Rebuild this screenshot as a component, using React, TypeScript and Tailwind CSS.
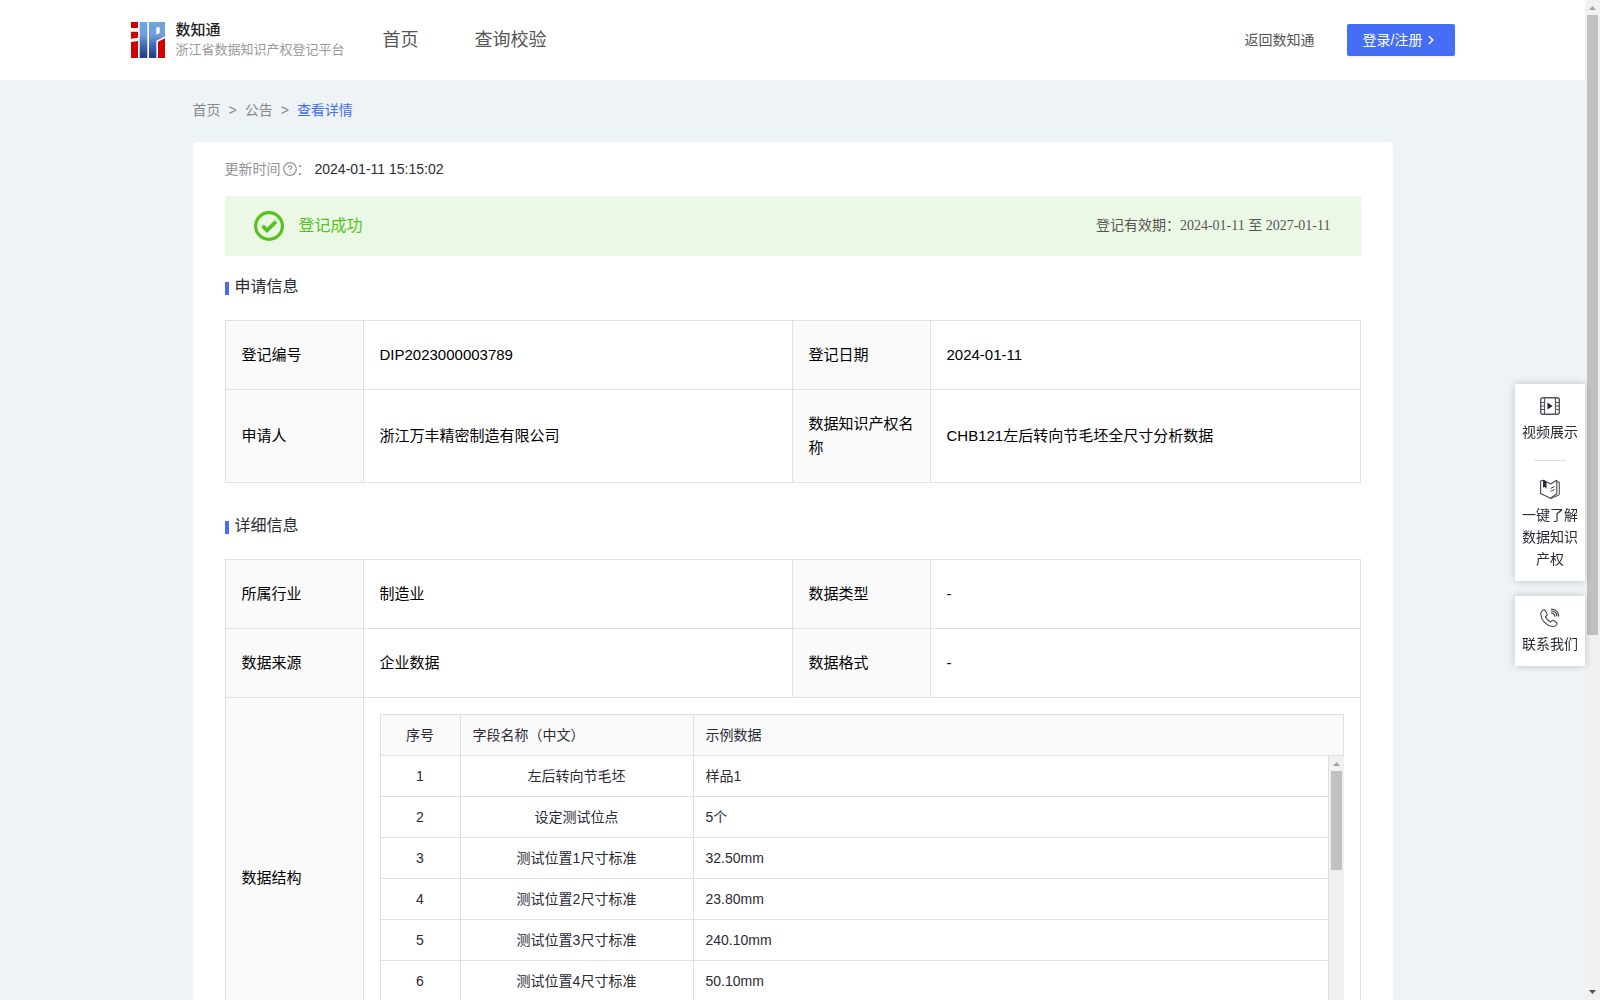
import { useState } from "react";
import { ChevronRight } from "lucide-react";

const applyRows = [
  ["登记编号", "DIP2023000003789", "登记日期", "2024-01-11"],
  ["申请人", "浙江万丰精密制造有限公司", "数据知识产权名称", "CHB121左后转向节毛坯全尺寸分析数据"],
];

const detailRows = [
  ["所属行业", "制造业", "数据类型", "-"],
  ["数据来源", "企业数据", "数据格式", "-"],
];

const fields = [
  { name: "左后转向节毛坯", sample: "样品1" },
  { name: "设定测试位点", sample: "5个" },
  { name: "测试位置1尺寸标准", sample: "32.50mm" },
  { name: "测试位置2尺寸标准", sample: "23.80mm" },
  { name: "测试位置3尺寸标准", sample: "240.10mm" },
  { name: "测试位置4尺寸标准", sample: "50.10mm" },
];

const line = "border-[#e0e0e0]";
const labelCell = `border-r border-b ${line} bg-[#fafafa] px-4 py-[22px] text-left font-normal`;
const valueCell = `border-r border-b ${line} px-4 py-[22px]`;
const fieldCell = `border-r border-b ${line} px-3 py-2 font-normal`;

function Logo() {
  return (
    <svg width="34" height="36" viewBox="0 0 102 108" aria-hidden="true">
      <defs>
        <linearGradient id="logoBlue" gradientUnits="userSpaceOnUse" x1="0" y1="0" x2="0" y2="108">
          <stop offset="0" stopColor="#6fa3df" />
          <stop offset="0.35" stopColor="#6f9fdc" />
          <stop offset="0.65" stopColor="#4468b0" />
          <stop offset="1" stopColor="#233a85" />
        </linearGradient>
      </defs>
      <g fill="#d00000">
        <path d="M0 0h21v18H0z" />
        <path d="M0 29h21v18L0 50z" />
        <path d="M0 60l21-3v51H0z" />
        <path d="M81 59l21-10v59H81z" />
      </g>
      <g fill="url(#logoBlue)">
        <path d="M26 0h23v108H26z" />
        <path fillRule="evenodd" d="M54 0h48v43L76 56v52H54zM76 16v22l10-5V16z" />
      </g>
    </svg>
  );
}

function VideoIcon() {
  return (
    <svg width="20" height="18" viewBox="0 0 20 18" fill="none" stroke="#55555f" aria-hidden="true">
      <rect x="0.7" y="0.7" width="18.6" height="16.6" rx="2" strokeWidth="1.4" />
      <path d="M4.500 1v16M15.500 1v16" strokeWidth="1.2" />
      <path d="M1 5.500h3.500M1 12.500h3.500M15.500 5.500H19M15.500 12.500H19M1 9h3.500M15.500 9H19" />
      <path d="M7.500 5.500v7l5-3.500z" fill="#1f1f2a" stroke="none" />
    </svg>
  );
}

function BookIcon() {
  return (
    <svg width="20" height="20" viewBox="0 0 20 20" fill="none" stroke="#45454f" strokeLinejoin="round" aria-hidden="true">
      <path d="M0.600 2v12.500l9.900 4.700 6.300-4.400V1.200L10.500 5 3.500 1.200z" strokeWidth="1.1" />
      <path d="M17 3h2.300v12.800L11 19.400" />
      <path d="M3 1l3.500 1.800V10L4.800 8 3 8.500z" fill="#2b2b37" stroke="none" />
      <path d="M10.500 9.500l4-2M10.500 12.500l4-2" />
    </svg>
  );
}

function PhoneIcon() {
  return (
    <svg width="20" height="20" viewBox="0 0 20 20" fill="none" stroke="#45454f" strokeWidth="1.1" strokeLinecap="round" aria-hidden="true">
      <path d="M2.500 2.300C1 3.600 0.600 5 0.800 6.800c0.600 5.500 5.500 10.700 11.400 11.700 2 .3 3.500-.5 4.600-2 .5-.7.300-1.400-.3-1.900l-2.500-1.900c-.8-.6-1.700-.5-2.300.2l-1.200 1.200C8.500 13 6.500 11 5.500 8.700l1.200-1.200c.6-.6.700-1.300.2-2L5.200 2.600c-.6-.9-1.800-1.100-2.700-.3z" />
      <path d="M11.500 5c2 .2 3 1.400 3.300 3.200M11.500 1.200c4.200.4 6.700 2.700 7.200 6.800M11.500 3c3 .3 5 2 5.300 5" strokeWidth="1.2" />
    </svg>
  );
}

function ScrollTrack({ thumb, end }: { thumb: string; end?: boolean }) {
  return (
    <div className="flex w-[15px] shrink-0 flex-col items-center bg-[#f1f1f1]" aria-hidden="true">
      <svg width="15" height="15" viewBox="0 0 15 15">
        <path d="M4 10h7L7.500 6z" fill="#a3a3a3" />
      </svg>
      <div className={`w-[11px] bg-[#c1c1c1] ${thumb}`} />
      {end && (
        <svg className="mt-auto" width="15" height="15" viewBox="0 0 15 15">
          <path d="M4 5h7L7.500 9z" fill="#505050" />
        </svg>
      )}
    </div>
  );
}

function SectionTitle({ text }: { text: string }) {
  return (
    <h2 className="flex items-center gap-[6px] text-base leading-6 text-[#2b2b37]">
      <span className="mt-[3px] h-[13px] w-1 bg-[#446ef6]" />
      {text}
    </h2>
  );
}

function InfoColumns() {
  return (
    <colgroup>
      <col className="w-[138px]" />
      <col className="w-[429px]" />
      <col className="w-[138px]" />
      <col />
    </colgroup>
  );
}

function InfoRow({ row }: { row: string[] }) {
  return (
    <tr>
      <th scope="row" className={labelCell}>{row[0]}</th>
      <td className={valueCell}>{row[1]}</td>
      <th scope="row" className={labelCell}>{row[2]}</th>
      <td className={valueCell}>{row[3]}</td>
    </tr>
  );
}

function FieldColumns() {
  return (
    <colgroup>
      <col className="w-20" />
      <col className="w-[233px]" />
      <col />
    </colgroup>
  );
}

function FieldTable() {
  return (
    <div className="text-sm leading-6 text-[#2b2b37]">
      <table className={`w-full table-fixed border-separate border-spacing-0 border-t border-l ${line} bg-[#fafafa]`}>
        <FieldColumns />
        <thead>
          <tr>
            <th className={fieldCell}>序号</th>
            <th className={`${fieldCell} text-left`}>字段名称（中文）</th>
            <th className={`${fieldCell} text-left`}>示例数据</th>
          </tr>
        </thead>
      </table>
      <div className="flex h-[286px]">
        <div className="min-w-0 flex-1 overflow-y-auto [scrollbar-width:none]">
          <table className={`w-full table-fixed border-separate border-spacing-0 border-l ${line}`}>
            <FieldColumns />
            <tbody>
              {fields.map((f, i) => (
                <tr key={f.name}>
                  <td className={`${fieldCell} text-center`}>{i + 1}</td>
                  <td className={`${fieldCell} text-center`}>{f.name}</td>
                  <td className={fieldCell}>{f.sample}</td>
                </tr>
              ))}
            </tbody>
          </table>
        </div>
        <ScrollTrack thumb="h-[99px]" />
      </div>
    </div>
  );
}

function SideTools() {
  const box = "flex flex-col items-center bg-white py-[11px] shadow-[0_0_8px_rgba(0,0,0,0.2)]";
  const item = "flex w-full flex-col items-center gap-1 px-[7px] text-sm leading-[22px] text-[#2b2b37]";
  return (
    <aside className="fixed top-96 right-[15px] flex w-[70px] flex-col gap-[15px]">
      <div className={box}>
        <button className={item}>
          <span className="flex h-[22px] items-center"><VideoIcon /></span>
          视频展示
        </button>
        <div className="my-[17px] h-px w-8 bg-[#dedede]" />
        <button className={item}>
          <span className="flex h-[22px] items-center"><BookIcon /></span>
          一键了解数据知识产权
        </button>
      </div>
      <div className={box}>
        <button className={item}>
          <span className="flex h-[22px] items-center"><PhoneIcon /></span>
          联系我们
        </button>
      </div>
    </aside>
  );
}

export default function App() {
  const [active, setActive] = useState("");

  const navClass = (name: string) => (active === name ? "text-[#446ef6]" : "text-[#555]");

  return (
    <div className="flex h-screen bg-[#eef3f6] font-['Liberation_Sans','Noto_Sans_CJK_SC',sans-serif]">
      <div className="min-w-0 flex-1 overflow-y-auto [scrollbar-width:none]">
        {/* Header */}
        <header className="bg-white">
          <div className="mx-auto flex h-20 max-w-[1324px] items-center">
            <a href="#home" className="flex w-[252px] items-center gap-[11px]">
              <Logo />
              <span className="whitespace-nowrap">
                <span className="block text-[15px] leading-5 font-medium text-[#222]">数知通</span>
                <span className="block text-[13px] leading-5 text-[#999]">浙江省数据知识产权登记平台</span>
              </span>
            </a>
            <nav className="flex gap-14 text-lg leading-6">
              <a href="#home" className={navClass("home")} onClick={() => setActive("home")}>首页</a>
              <a href="#check" className={navClass("check")} onClick={() => setActive("check")}>查询校验</a>
            </nav>
            <a href="#back" className="mr-8 ml-auto text-sm text-[#555]">返回数知通</a>
            <button className="flex h-8 w-[108px] items-center gap-[2px] rounded-[2px] bg-[#446ef6] pl-4 text-sm text-white shadow-[0_2px_0_rgba(0,0,0,0.045)]">
              登录/注册
              <ChevronRight size={14} strokeWidth={2.5} />
            </button>
          </div>
        </header>

        <main className="mx-auto max-w-[1200px]">
          {/* Breadcrumb */}
          <nav className="flex gap-2 pt-[19px] pb-[21px] text-sm leading-[22px] text-[#888]">
            <a href="#home">首页</a>
            <span>&gt;</span>
            <a href="#notice">公告</a>
            <span>&gt;</span>
            <a href="#detail" className="text-[#446ef6]">查看详情</a>
          </nav>

          <section className="rounded bg-white px-8 pt-4 pb-8">
            <div className="flex items-center text-sm leading-[22px] text-[#909399]">
              更新时间
              <svg className="ml-[2px]" width="14" height="14" viewBox="0 0 14 14" fill="none" stroke="#909399" aria-hidden="true">
                <circle cx="7" cy="7" r="6.300" strokeWidth="1.200" />
                <path d="M5.200 5.600c0-2.300 3.600-2.300 3.600 0 0 1.200-1.800 1.200-1.800 2.500M7 9.500v1.200" strokeWidth="1.100" />
              </svg>
              ：
              <time className="ml-1 text-[#2b2b37]">2024-01-11 15:15:02</time>
            </div>

            {/* Status banner */}
            <div className="mt-4 flex h-[60px] items-center bg-[#ecf8e6] pr-[30px] pl-[29px]">
              <svg width="30" height="30" viewBox="0 0 30 30" fill="none" stroke="#52c41a" aria-hidden="true">
                <circle cx="15" cy="15" r="13.400" strokeWidth="3.200" />
                <path d="M8.500 14.800l4.500 4.500 9-8.600" strokeWidth="3.800" />
              </svg>
              <span className="ml-[15px] text-base leading-6 text-[#52c41a]">登记成功</span>
              <span className="ml-auto font-['Liberation_Serif','Noto_Sans_CJK_SC',serif] text-sm text-[#555]">
                登记有效期：2024-01-11 至 2027-01-11
              </span>
            </div>

            <div className="mt-[19px]">
              <SectionTitle text="申请信息" />
            </div>
            <table className={`mt-[21px] w-full table-fixed border-separate border-spacing-0 border-t border-l ${line} text-[15px] leading-6 text-black`}>
              <InfoColumns />
              <tbody>
                {applyRows.map((row) => <InfoRow key={row[0]} row={row} />)}
              </tbody>
            </table>

            <div className="mt-[31px]">
              <SectionTitle text="详细信息" />
            </div>
            <table className={`mt-[21px] w-full table-fixed border-separate border-spacing-0 border-t border-l ${line} text-[15px] leading-6 text-black`}>
              <InfoColumns />
              <tbody>
                {detailRows.map((row) => <InfoRow key={row[0]} row={row} />)}
                <tr>
                  <th scope="row" className={labelCell}>数据结构</th>
                  <td colSpan={3} className={`border-r border-b ${line} p-4`}>
                    <FieldTable />
                  </td>
                </tr>
              </tbody>
            </table>
          </section>
        </main>
      </div>

      <SideTools />
      <ScrollTrack thumb="h-[62%]" end />
    </div>
  );
}
